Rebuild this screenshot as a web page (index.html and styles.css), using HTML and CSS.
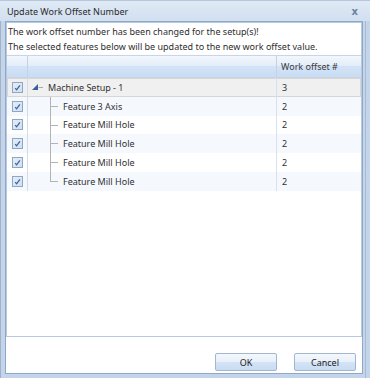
FILE: index.html
```html
<!DOCTYPE html>
<html>
<head>
<meta charset="utf-8">
<link rel="stylesheet" href="styles.css">
</head>
<body>
<div class="window">
  <div class="titlebar">
    <span class="title">Update Work Offset Number</span>
    <span class="close">x</span>
  </div>
  <div class="client">
    <div class="panel">
      <p class="msg">The work offset number has been changed for the setup(s)!<br>The selected features below will be updated to the new work offset value.</p>
      <div class="grid">
        <div class="row head">
          <div class="c-check"></div>
          <div class="c-tree"></div>
          <div class="c-num">Work offset #</div>
        </div>
        <div class="row sel">
          <div class="c-check"><span class="cb"><svg width="11" height="11" viewBox="0 0 11 11"><path d="M3.2 6.2 L4.6 7.8 L7.9 3.3" fill="none" stroke="#3d5f96" stroke-width="1.2"/></svg></span></div>
          <div class="c-tree"><span class="exp"><svg width="12" height="8" viewBox="0 0 12 8"><path d="M6 1 L6 7 L0 7 Z" fill="#3a5f9c"/><path d="M6.5 4.5 H11" stroke="#a8a8a8" stroke-width="1"/></svg></span><span class="txt">Machine Setup - 1</span></div>
          <div class="c-num">3</div>
        </div>
        <div class="row alt">
          <div class="c-check"><span class="cb"><svg width="11" height="11" viewBox="0 0 11 11"><path d="M3.2 6.2 L4.6 7.8 L7.9 3.3" fill="none" stroke="#3d5f96" stroke-width="1.2"/></svg></span></div>
          <div class="c-tree"><span class="line first"></span><span class="txt">Feature 3 Axis</span></div>
          <div class="c-num">2</div>
        </div>
        <div class="row">
          <div class="c-check"><span class="cb"><svg width="11" height="11" viewBox="0 0 11 11"><path d="M3.2 6.2 L4.6 7.8 L7.9 3.3" fill="none" stroke="#3d5f96" stroke-width="1.2"/></svg></span></div>
          <div class="c-tree"><span class="line"></span><span class="txt">Feature Mill Hole</span></div>
          <div class="c-num">2</div>
        </div>
        <div class="row alt">
          <div class="c-check"><span class="cb"><svg width="11" height="11" viewBox="0 0 11 11"><path d="M3.2 6.2 L4.6 7.8 L7.9 3.3" fill="none" stroke="#3d5f96" stroke-width="1.2"/></svg></span></div>
          <div class="c-tree"><span class="line"></span><span class="txt">Feature Mill Hole</span></div>
          <div class="c-num">2</div>
        </div>
        <div class="row">
          <div class="c-check"><span class="cb"><svg width="11" height="11" viewBox="0 0 11 11"><path d="M3.2 6.2 L4.6 7.8 L7.9 3.3" fill="none" stroke="#3d5f96" stroke-width="1.2"/></svg></span></div>
          <div class="c-tree"><span class="line"></span><span class="txt">Feature Mill Hole</span></div>
          <div class="c-num">2</div>
        </div>
        <div class="row alt">
          <div class="c-check"><span class="cb"><svg width="11" height="11" viewBox="0 0 11 11"><path d="M3.2 6.2 L4.6 7.8 L7.9 3.3" fill="none" stroke="#3d5f96" stroke-width="1.2"/></svg></span></div>
          <div class="c-tree"><span class="line last"></span><span class="txt">Feature Mill Hole</span></div>
          <div class="c-num">2</div>
        </div>
      </div>
    </div>
    <div class="buttons">
      <button class="btn">OK</button>
      <button class="btn">Cancel</button>
    </div>
  </div>
</div>
</body>
</html>
```

FILE: styles.css
```css
html, body {
  margin: 0;
  padding: 0;
  background: #ffffff;
}
body {
  font-family: "Segoe UI", "Noto Sans", "DejaVu Sans", sans-serif;
  font-size: 9px;
  color: #303030;
}
.window {
  width: 370px;
  height: 378px;
  box-sizing: border-box;
  background: #c4d5eb;
  border-left: 1px solid #a3b3c7;
  padding: 0 7px 4px 4px;
  display: flex;
  flex-direction: column;
  box-shadow: inset -4px 0 0 #c4d5eb, inset -5px 0 0 #a9bbd2;
}
.titlebar {
  height: 21px;
  flex: none;
  display: flex;
  align-items: center;
  justify-content: space-between;
  margin: 0 -7px 0 -5px;
  padding: 0 12px 0 7px;
  background: linear-gradient(#e0eaf6, #d2dfef);
  border-top: 1px solid #b7c7da;
  box-sizing: border-box;
}
.title {
  font-size: 9px;
  color: #2a2a2a;
  padding-top: 1px;
}
.close {
  font-family: "DejaVu Sans", sans-serif;
  font-size: 10px;
  font-weight: bold;
  color: #6b82a3;
}
.client {
  flex: 1;
  background: #ffffff;
  border: 1px solid #8fa8c8;
  display: flex;
  flex-direction: column;
}
.panel {
  height: 315px;
  flex: none;
  border: 1px solid #b6c9e0;
  box-sizing: border-box;
}
.msg {
  margin: 0;
  padding: 1px 0 0 1px;
  line-height: 15px;
  color: #2e2e2e;
}
.grid {
  margin-top: 1px;
  border-top: 1px solid #c5d6ea;
}
.row {
  display: flex;
  height: 18.8px;
  align-items: stretch;
}
.row.head {
  height: 21px;
  background: linear-gradient(#f3f7fc 0%, #e4edf9 45%, #d3e3f7 50%, #c9dcf3 100%);
  border-bottom: 1px solid #c6d4e6;
}
.row.alt {
  background: #f5f9fe;
}
.row.sel {
  background: #f0f0f0;
  box-shadow: inset 0 0 0 1px #d6d6d6;
}
.c-check {
  width: 20px;
  flex: none;
  border-right: 1px solid #d1ddeb;
  display: flex;
  align-items: center;
  justify-content: center;
}
.head .c-check, .head .c-tree {
  border-right: 1px solid #c2d3e8;
}
.c-tree {
  flex: 1;
  border-right: 1px solid #d8e2ee;
  display: flex;
  align-items: center;
  position: relative;
}
.c-num {
  width: 84px;
  flex: none;
  padding-left: 5px;
  display: flex;
  align-items: center;
  box-sizing: border-box;
}
.head .c-num {
  color: #3a3a3a;
  padding-left: 4px;
}
.cb {
  width: 11px;
  height: 11px;
  box-sizing: border-box;
  border: 1px solid #8fa6c4;
  background: linear-gradient(135deg, #e4edf8, #cfdff2);
  display: block;
  position: relative;
}
.cb svg {
  position: absolute;
  left: -1px;
  top: -1px;
}
.exp {
  margin-left: 4px;
  width: 12px;
  height: 8px;
  display: block;
}
.exp svg { display: block; }
.row.sel .txt {
  margin-left: 4px;
}
.line {
  width: 8px;
  height: 100%;
  margin-left: 22px;
  box-sizing: border-box;
  border-left: 1px solid #b3b3b3;
  position: relative;
}
.line::after {
  content: "";
  position: absolute;
  left: 0;
  top: 9px;
  width: 7px;
  border-top: 1px solid #b3b3b3;
}
.line.last {
  height: 10px;
  align-self: flex-start;
}
.row:not(.sel) .txt {
  margin-left: 5px;
}
.buttons {
  display: flex;
  justify-content: flex-end;
  gap: 17px;
  padding: 16px 6px 0 0;
}
.btn {
  width: 62px;
  height: 18px;
  font-family: inherit;
  font-size: 9px;
  color: #222;
  border: 1px solid #a3b6cf;
  border-radius: 2px;
  background: linear-gradient(#f4f8fc 0%, #e8f0fa 48%, #d4e3f6 52%, #c9dcf3 100%);
  padding: 0;
}
```
